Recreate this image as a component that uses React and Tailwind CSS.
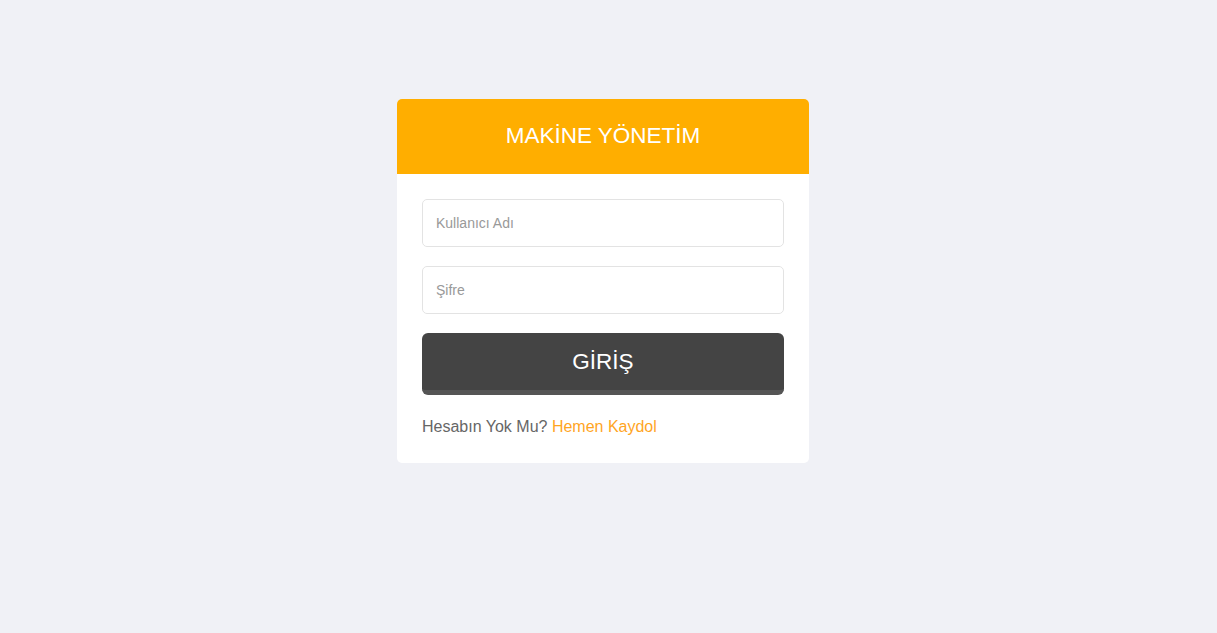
export default function App() {
  return (
    <div className="min-h-[633px] w-full bg-[#f0f1f6] flex justify-center pt-[99px] pr-[11px]" style={{ fontFamily: '"Liberation Sans", Arial, sans-serif' }}>
      <div className="w-[412px] h-[364px] bg-white rounded-[5px] overflow-hidden">
        <div className="h-[75px] bg-[#ffae00] flex items-center justify-center">
          <h1 className="text-[22.5px] text-white leading-none">MAKİNE YÖNETİM</h1>
        </div>
        <div className="px-[25px] pt-[25px]">
          <input
            type="text"
            placeholder="Kullanıcı Adı"
            className="w-full h-[48px] border border-[#e3e3e3] rounded-[5px] px-[13px] text-[14px] text-[#555] placeholder:text-[#999] outline-none"
          />
          <input
            type="password"
            placeholder="Şifre"
            className="mt-[19px] w-full h-[48px] border border-[#e3e3e3] rounded-[5px] px-[13px] text-[14px] text-[#555] placeholder:text-[#999] outline-none"
          />
          <button className="mt-[19px] w-full h-[62px] bg-[#444444] text-white text-[22.5px] rounded-[6px] border-b-[5px] border-[#555555] flex items-center justify-center pt-[1px]">
            GİRİŞ
          </button>
          <p className="mt-[20px] text-[16px] leading-[24px] text-[#666]">
            Hesabın Yok Mu? <a href="#" className="text-[#ffa51f]">Hemen Kaydol</a>
          </p>
        </div>
      </div>
    </div>
  );
}
